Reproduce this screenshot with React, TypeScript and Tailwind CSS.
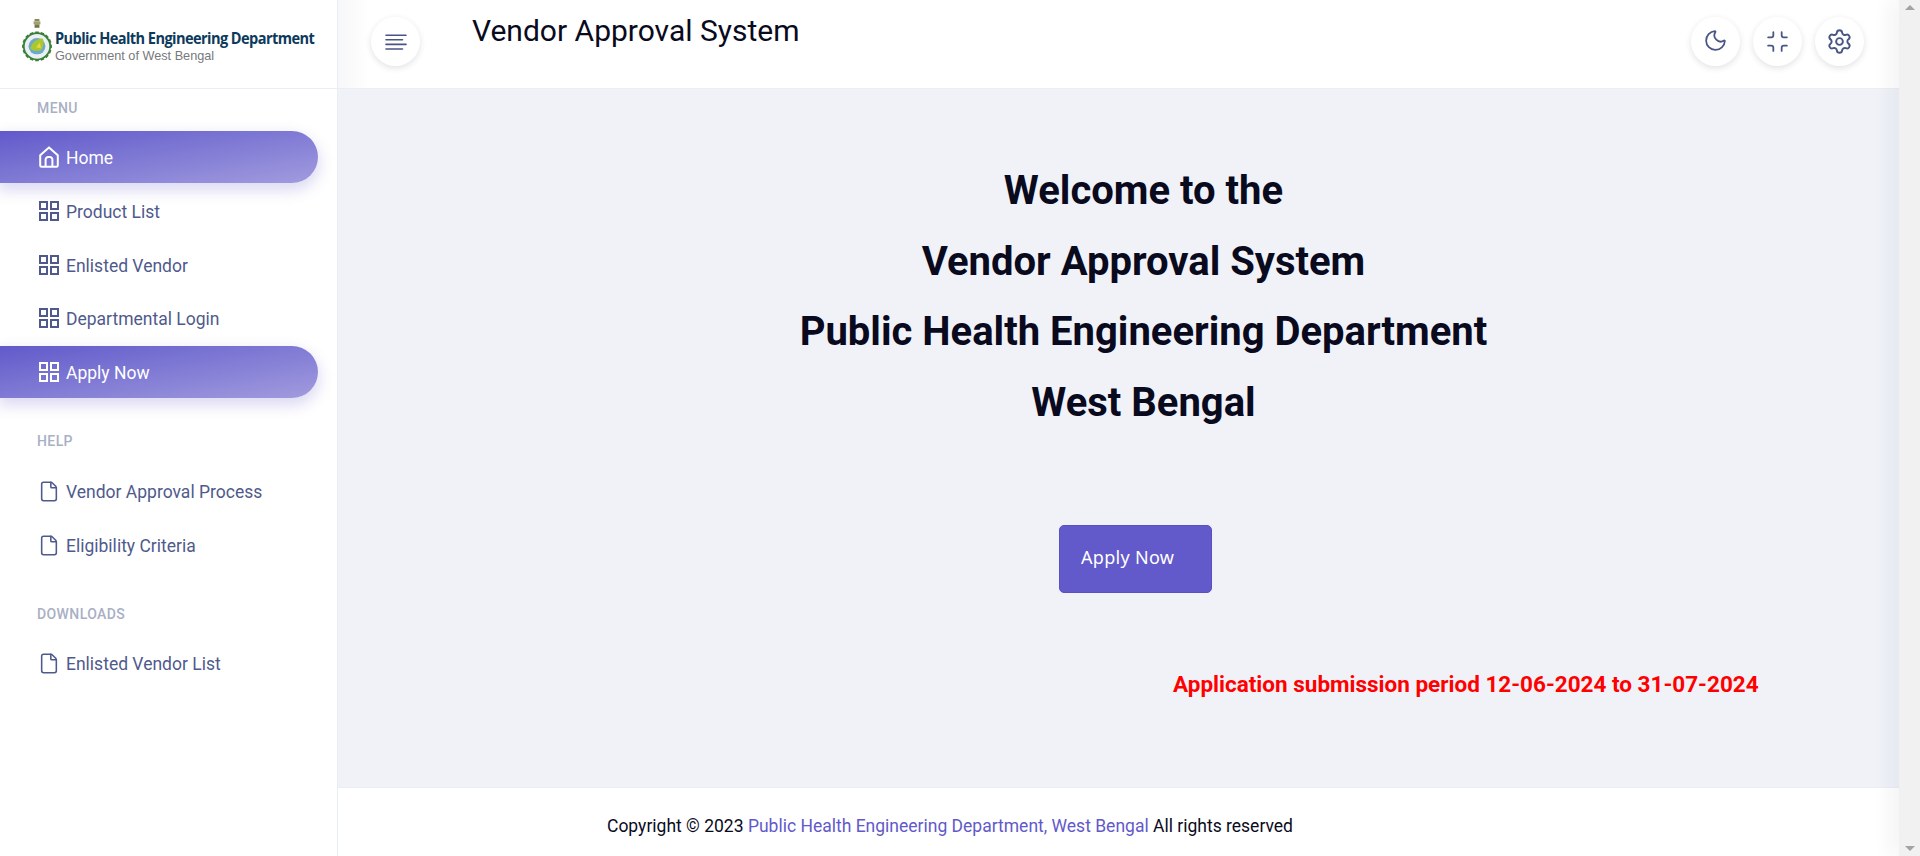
import React from "react";
import { Moon, Minimize, Settings, File } from "lucide-react";

const roboto = "font-['Roboto',sans-serif]";

function GridIcon({ className = "" }: { className?: string }) {
  return (
    <svg viewBox="0 0 20 20" className={`w-[20px] h-[20px] ${className}`} fill="none" stroke="currentColor" strokeWidth="2">
      <rect x="1" y="1" width="7" height="7" />
      <rect x="12" y="1" width="7" height="7" />
      <rect x="1" y="12" width="7" height="7" />
      <rect x="12" y="12" width="7" height="7" />
    </svg>
  );
}

function HomeIcon() {
  return (
    <svg viewBox="0 0 20 22" className="w-[20px] h-[22px]" fill="none" stroke="currentColor" strokeWidth="2" strokeLinejoin="round">
      <path d="M1.2 9.2 10 1.4l8.8 7.8v10.2a1.4 1.4 0 0 1-1.4 1.4H2.6a1.4 1.4 0 0 1-1.4-1.4z" />
      <path d="M6.6 20.6v-7a2.6 2.6 0 0 1 2.6-2.6h1.6a2.6 2.6 0 0 1 2.6 2.6v7" />
    </svg>
  );
}

function Emblem() {
  const teeth = Array.from({ length: 16 }, (_, i) => i * 22.5);
  return (
    <svg viewBox="0 0 32 46" className="w-[32px] h-[45px] shrink-0">
      <rect x="13.5" y="1" width="5" height="2.5" fill="#8a8a55" />
      <rect x="12.5" y="3.5" width="7" height="3" fill="#a0a070" />
      <rect x="13.5" y="6.5" width="5" height="3.5" fill="#76764a" />
      {teeth.map((a) => (
        <rect key={a} x="14.2" y="13.8" width="3.6" height="1.6" fill="#3a7f38" transform={`rotate(${a} 16 29)`} />
      ))}
      <circle cx="16" cy="29" r="14.4" fill="#3a7f38" />
      <circle cx="16" cy="29" r="12.6" fill="#e8f0f4" />
      <circle cx="16" cy="29" r="8.6" fill="#6fa8cc" />
      <path d="M9 31c2-6 7-10 13-10 1 3 1 9-2 12-4 1-8 1-11-2z" fill="#a8c82c" />
      <path d="M15 30l4-5 1 6z" fill="#e3d84a" />
      <path d="M7 35c4 3 13 3 18 0-3 4-14 5-18 0z" fill="#e8f0f4" />
    </svg>
  );
}

function SectionLabel({ children, className = "" }: { children: React.ReactNode; className?: string }) {
  return (
    <div className={`pl-[37px] text-[14px] leading-[16px] font-medium tracking-[0.4px] text-[#a8b0c4] ${className}`}>
      {children}
    </div>
  );
}

function NavItem({ icon, label, active = false }: { icon: React.ReactNode; label: string; active?: boolean }) {
  return (
    <div
      className={
        active
          ? "flex items-center h-[52px] w-[318px] pl-[38px] rounded-r-[26px] text-white bg-gradient-to-br from-[#6259ca] to-[#a29bde] shadow-[0_6px_14px_2px_rgba(98,89,202,0.22)]"
          : "flex items-center h-[52px] w-[318px] pl-[38px] text-[#4f5a8c]"
      }
    >
      <span className="w-[22px] flex justify-center shrink-0">{icon}</span>
      <span className="ml-[6px] pt-[2px] text-[17.5px] leading-[24px]">{label}</span>
    </div>
  );
}

function CircleButton({ children, className = "" }: { children: React.ReactNode; className?: string }) {
  return (
    <div className={`w-[49px] h-[49px] rounded-full bg-white shadow-[0_2px_6px_rgba(30,30,60,0.13)] flex items-center justify-center text-[#495584] ${className}`}>
      {children}
    </div>
  );
}

export default function App() {
  return (
    <div className={`flex w-[1920px] h-[856px] overflow-hidden bg-white ${roboto}`}>
      <aside className="w-[338px] shrink-0 border-r border-[#e9edf4] bg-white">
        <div className="h-[89px] border-b border-[#e9edf4] flex items-start pl-[21px] pt-[18px]">
          <Emblem />
          <div className="ml-[2px] mt-[10px]">
            <div className="origin-left scale-x-[0.91] font-['Open_Sans',sans-serif] font-bold text-[16px] leading-[20px] tracking-[-0.62px] text-[#0d3a5c] whitespace-nowrap">
              Public Health Engineering Department
            </div>
            <div className="font-['Liberation_Sans',sans-serif] text-[12.7px] leading-[16px] text-[#77797c] whitespace-nowrap">
              Government of West Bengal
            </div>
          </div>
        </div>
        <SectionLabel className="mt-[11px]">MENU</SectionLabel>
        <div className="mt-[15px] flex flex-col gap-[1.75px]">
          <NavItem active icon={<HomeIcon />} label="Home" />
          <NavItem icon={<GridIcon />} label="Product List" />
          <NavItem icon={<GridIcon />} label="Enlisted Vendor" />
          <NavItem icon={<GridIcon />} label="Departmental Login" />
          <NavItem active icon={<GridIcon />} label="Apply Now" />
        </div>
        <SectionLabel className="mt-[35px]">HELP</SectionLabel>
        <div className="mt-[16px] flex flex-col gap-[2px]">
          <NavItem icon={<File size={25} strokeWidth={1.7} />} label="Vendor Approval Process" />
          <NavItem icon={<File size={25} strokeWidth={1.7} />} label="Eligibility Criteria" />
        </div>
        <SectionLabel className="mt-[35px]">DOWNLOADS</SectionLabel>
        <div className="mt-[15px]">
          <NavItem icon={<File size={25} strokeWidth={1.7} />} label="Enlisted Vendor List" />
        </div>
      </aside>

      <main className="flex-1 min-w-0 flex flex-col">
        <header className="h-[89px] shrink-0 border-b border-[#e9edf4] flex items-start bg-gradient-to-r from-[#f7f7f9] via-white via-[2%] to-white">
          <CircleButton className="ml-[33px] mt-[17px]">
            <svg viewBox="0 0 24 24" className="w-[24px] h-[24px]" fill="none" stroke="currentColor" strokeWidth="1.6" strokeLinecap="round">
              <path d="M2 5.2h20M2 9.8h16.5M2 14.4h20M2 19h16.5" />
            </svg>
          </CircleButton>
          <h1 className="ml-[52px] mt-[13px] text-[30px] leading-[36px] font-normal text-[#0a0a1e]">Vendor Approval System</h1>
          <div className="ml-auto mr-[35px] mt-[17px] flex gap-[13px]">
            <CircleButton><Moon size={25} strokeWidth={1.7} className="-mt-[2px]" /></CircleButton>
            <CircleButton><Minimize size={25} strokeWidth={1.7} className="-mt-[1px]" /></CircleButton>
            <CircleButton><Settings size={27} strokeWidth={1.7} /></CircleButton>
          </div>
        </header>

        <section className="flex-1 bg-[#f0f2f8] flex flex-col">
          <div className="pt-[67px] pl-[50px] flex flex-col items-center text-[40px] leading-[70.7px] font-bold text-[#0a0a1e]">
            <div>Welcome to the</div>
            <div>Vendor Approval System</div>
            <div>Public Health Engineering Department</div>
            <div>West Bengal</div>
          </div>
          <div className="mt-[86px] ml-[721px] w-[153px] h-[68px] rounded-[5px] bg-[#6259ca] border border-[#5a51c0] flex items-center pl-[21px] pb-[2px] font-['Noto_Sans',sans-serif] text-[18px] tracking-[0.3px] text-white">
            Apply Now
          </div>
          <div className="mt-[75px] ml-[835px] text-[22.5px] leading-[32px] font-bold text-[#ff0000] whitespace-nowrap">
            Application submission period 12-06-2024 to 31-07-2024
          </div>
        </section>

        <footer className="h-[69px] shrink-0 border-t border-[#e9edf4] bg-white flex items-center pl-[269px] pt-[8px] text-[17.5px] text-[#0a0a1e]">
          <span>Copyright © 2023&nbsp;</span>
          <span className="text-[#6259ca]">Public Health Engineering Department, West Bengal</span>
          <span>&nbsp;All rights reserved</span>
        </footer>
      </main>

      <div className="w-[21px] shrink-0 bg-[#f1f1f1] flex flex-col justify-between items-center py-[5px] shadow-[-10px_0_18px_rgba(40,40,80,0.05)]">
        <div className="w-0 h-0 border-x-[5px] border-x-transparent border-b-[5px] border-b-[#a3a3a3]" />
        <div className="w-0 h-0 border-x-[5px] border-x-transparent border-t-[5px] border-t-[#a3a3a3]" />
      </div>
    </div>
  );
}
